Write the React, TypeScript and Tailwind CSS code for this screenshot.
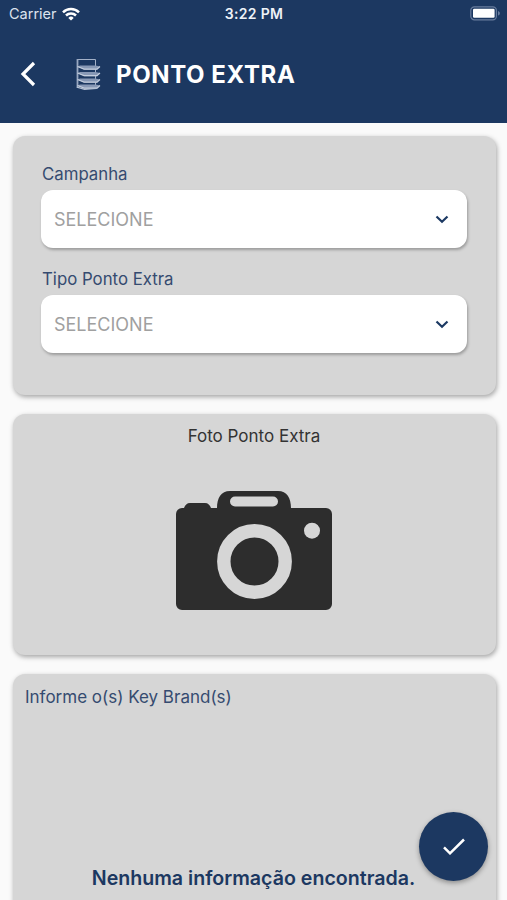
import { useState } from 'react'
import type { ReactNode } from 'react'

// ─────────────────────────────────────────────────
// Icons
// ─────────────────────────────────────────────────

function WifiIcon() {
  return (
    <svg width="18" height="14" viewBox="0 0 18 14" fill="none" stroke="#fff" strokeWidth="2.5">
      <path d="M1 5.3a11.4 11.4 0 0 1 16 0" />
      <path d="M4 8.5a7.1 7.1 0 0 1 10 0" />
      <path d="M9 13.6 6.3 10.9a3.9 3.9 0 0 1 5.4 0Z" fill="#fff" stroke="none" />
    </svg>
  )
}

function BatteryIcon() {
  return (
    <svg width="31" height="15" viewBox="0 0 31 15">
      <rect x="0.8" y="0.8" width="25.6" height="13" rx="3.6" fill="none" stroke="#687c9d" strokeWidth="1.2" />
      <rect x="3" y="2.8" width="21.6" height="9" rx="1.2" fill="#fff" />
      <path d="M28 5v4.6c1.2-.4 1.9-1.3 1.9-2.3S29.2 5.4 28 5Z" fill="#687c9d" />
    </svg>
  )
}

function BackIcon() {
  return (
    <svg width="16" height="26" viewBox="0 0 16 26" fill="none" stroke="#fff" strokeWidth="3.2">
      <path d="M14 2 3 13l11 11" />
    </svg>
  )
}

function ShelfIcon() {
  return (
    <svg width="27" height="33" viewBox="0 0 27 33" fill="none">
      <path d="M2 1.500h18.500v27" stroke="#a3b1c8" strokeWidth="1" />
      <path d="M2.500 1v29" stroke="#98a8c1" strokeWidth="1.800" />
      {[7.5, 14, 20.5, 26.5].map((y) => (
        <g key={y} transform={`translate(0 ${y})`}>
          <path d="M5 0h15.500l4.500 1-3 3.200H9.500L2.500 1Z" fill="#8798b5" />
          <path d="m2.500 1 6.500 2.600h13L25 1" stroke="#c3cddd" strokeWidth="1.200" />
        </g>
      ))}
      <path d="m2 29.200 7.500 2.200 12-1" stroke="#b4c1d4" strokeWidth="1.300" />
    </svg>
  )
}

function ChevronIcon() {
  return (
    <svg width="14" height="9" viewBox="0 0 14 9" fill="none" stroke="#1c3963" strokeWidth="2.2">
      <path d="m1.500 1.500 5.500 5.300 5.500-5.300" />
    </svg>
  )
}

function CameraIcon() {
  return (
    <svg width="156" height="119" viewBox="0 0 156 119">
      <path
        fill="#2d2d2d"
        fillRule="evenodd"
        d="M6 17h2c1-3 3-5 6-5h15c3 0 5 2 6 5h6c0-10 4-17 13-17h48c9 0 13 7 13 17h35a6 6 0 0 1 6 6v90a6 6 0 0 1-6 6H6a6 6 0 0 1-6-6V23a6 6 0 0 1 6-6ZM59 5.500a5 5 0 0 0 0 10h38a5 5 0 0 0 0-10Z"
      />
      <circle cx="78.500" cy="70.500" r="30.700" fill="none" stroke="#d6d6d6" strokeWidth="13.400" />
      <circle cx="136" cy="39.700" r="8" fill="#d6d6d6" />
    </svg>
  )
}

function CheckIcon() {
  return (
    <svg width="22" height="17" viewBox="0 0 22 17" fill="none" stroke="#fff" strokeWidth="2.5">
      <path d="m1 9.300 6 6L21 1.500" />
    </svg>
  )
}

// ─────────────────────────────────────────────────
// Building blocks
// ─────────────────────────────────────────────────

function Card({ className = '', children }: { className?: string; children: ReactNode }) {
  return (
    <section className={`rounded-xl bg-[#d6d6d6] shadow-[1px_2px_5px_rgba(0,0,0,0.35)] ${className}`}>
      {children}
    </section>
  )
}

function SelectField({ label }: { label: string }) {
  return (
    <div>
      <p className="pl-px text-[16.8px] leading-[22px] text-[#354b70]">{label}</p>
      <button
        type="button"
        className="mt-[5px] flex h-[58px] w-full items-center justify-between rounded-xl bg-white pr-[18px] pl-[13px] shadow-[1px_2px_3px_rgba(0,0,0,0.28)]"
      >
        <span className="pt-0.5 text-lg text-[#a0a0a0]">SELECIONE</span>
        <ChevronIcon />
      </button>
    </div>
  )
}

// ─────────────────────────────────────────────────
// Screen
// ─────────────────────────────────────────────────

export default function App() {
  const [keyBrands] = useState<string[]>([])

  return (
    <div className="relative flex h-[900px] w-[507px] flex-col overflow-hidden bg-[#fafafa] font-['Inter',sans-serif]">
      <header className="h-[123px] shrink-0 bg-[#1c3861] text-white">
        <div className="grid h-[27px] grid-cols-3 items-center pr-[6px] pl-[9px]">
          <div className="flex items-center gap-[5px]">
            <span className="text-[14.5px] text-[#dce3ee]">Carrier</span>
            <WifiIcon />
          </div>
          <span className="pr-0.5 text-center text-sm font-semibold tracking-[0.3px] text-[#eef2f8]">3:22 PM</span>
          <div className="flex justify-end">
            <BatteryIcon />
          </div>
        </div>
        <div className="flex h-[94px] items-center pl-5">
          <BackIcon />
          <div className="ml-[39px]">
            <ShelfIcon />
          </div>
          <h1 className="mt-0.5 ml-[14px] text-2xl font-bold tracking-[0.6px]">PONTO EXTRA</h1>
        </div>
      </header>

      <main className="flex flex-1 flex-col gap-[19px] pt-[13px] pr-[11px] pl-[13px]">
        <Card className="flex h-[259px] shrink-0 flex-col gap-5 pt-[27px] pr-[29px] pl-7">
          <SelectField label="Campanha" />
          <SelectField label="Tipo Ponto Extra" />
        </Card>

        <Card className="flex h-[241px] shrink-0 flex-col items-center pt-[11px]">
          <p className="pr-px text-[17px] leading-[22px] text-[#333333]">Foto Ponto Extra</p>
          <div className="mt-[44px] pr-px">
            <CameraIcon />
          </div>
        </Card>

        <Card className="flex h-[260px] shrink-0 flex-col px-3 pt-3">
          <p className="text-[17px] leading-[22px] text-[#354b70]">Informe o(s) Key Brand(s)</p>
          {keyBrands.length === 0 && (
            <p className="mt-[157px] pr-0.5 text-center text-[19.6px] leading-[26px] font-semibold text-[#1c3861]">
              Nenhuma informação encontrada.
            </p>
          )}
        </Card>
      </main>

      <button
        type="button"
        aria-label="Confirmar"
        className="absolute top-[812px] left-[419px] flex size-[69px] items-center justify-center rounded-full bg-[#1c3861] shadow-[0_2px_5px_rgba(0,0,0,0.35)]"
      >
        <CheckIcon />
      </button>
    </div>
  )
}
